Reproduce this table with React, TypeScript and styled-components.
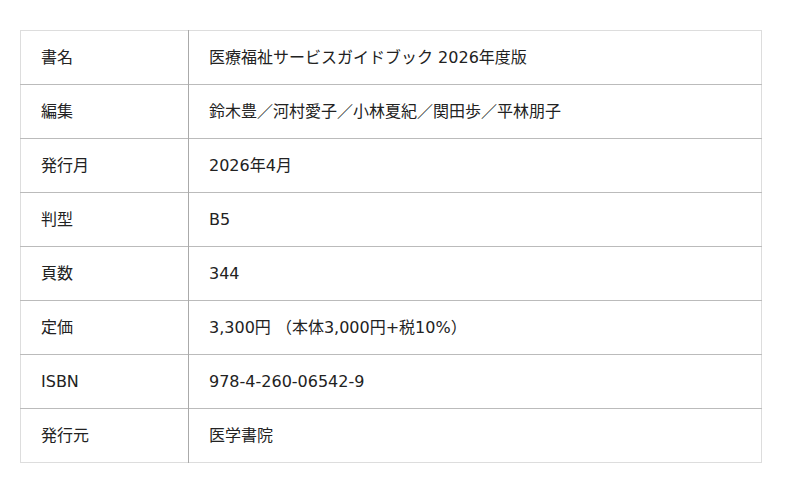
import styled, { createGlobalStyle } from "styled-components";

const GlobalStyle = createGlobalStyle`
  body {
    margin: 0;
    background: #ffffff;
    font-family: "DejaVu Sans", "Noto Sans CJK JP", sans-serif;
    color: #222222;
  }
`;

const Page = styled.div`
  padding: 30px 38px 30px 20px;
`;

const Table = styled.table`
  width: 742px;
  border-collapse: collapse;
  border: 1px solid #dddddd;
  font-size: 16px;
  line-height: 1.5;
`;

const Row = styled.tr`
  height: 54px;
  border-bottom: 1px solid #bbbbbb;

  &:last-child {
    border-bottom: 1px solid #dddddd;
  }
`;

const Label = styled.th`
  width: 127px;
  padding: 0 20px;
  text-align: left;
  font-weight: normal;
  border-right: 1px solid #aaaaaa;
  vertical-align: middle;
`;

const Value = styled.td`
  padding: 0 20px;
  vertical-align: middle;
`;

const rows: [string, string][] = [
  ["書名", "医療福祉サービスガイドブック 2026年度版"],
  ["編集", "鈴木豊／河村愛子／小林夏紀／関田歩／平林朋子"],
  ["発行月", "2026年4月"],
  ["判型", "B5"],
  ["頁数", "344"],
  ["定価", "3,300円 （本体3,000円+税10%）"],
  ["ISBN", "978-4-260-06542-9"],
  ["発行元", "医学書院"],
];

export default function App() {
  return (
    <>
      <GlobalStyle />
      <Page>
        <Table>
          <tbody>
            {rows.map(([label, value]) => (
              <Row key={label}>
                <Label>{label}</Label>
                <Value>{value}</Value>
              </Row>
            ))}
          </tbody>
        </Table>
      </Page>
    </>
  );
}
